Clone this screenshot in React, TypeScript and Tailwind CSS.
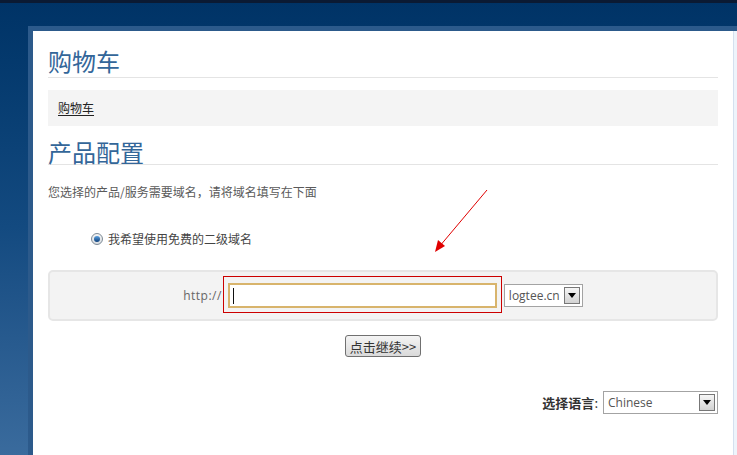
import React from 'react'

const cjk = "font-['Noto_Sans_CJK_SC','Noto_Sans',sans-serif]"
const latin = "font-['Open_Sans','Noto_Sans_CJK_SC',sans-serif]"

function DropArrow() {
  return (
    <span className='flex h-[17px] w-[16px] items-center justify-center border border-[#777] bg-linear-to-b from-[#f6f6f6] to-[#d2d2d2]'>
      <svg width='8' height='5' viewBox='0 0 8 5'>
        <path d='M0 0 H8 L4 5 Z' fill='#000' />
      </svg>
    </span>
  )
}

function FakeSelect({ value, width }: { value: string, width: string }) {
  return (
    <div className={`flex h-[23px] ${width} items-center justify-between border border-[#a3a3a3] bg-white pl-[4px] pr-[2px]`}>
      <span className={`${latin} text-[12px] leading-none text-[#555]`}>{value}</span>
      <DropArrow />
    </div>
  )
}

export default function App() {
  return (
    <div className={`relative h-[455px] w-[737px] overflow-hidden bg-linear-to-b from-[#003366] via-[#134a80] to-[#3a6b9d] ${cjk}`}>
      <div className='h-[3px] bg-[#0b1a33]' />

      <div className='ml-[28px] mt-[23px] flex h-[429px] border-l-[5px] border-t-[5px] border-[#2c5a8b] bg-white'>
        <div className='w-[700px] px-[15px] pt-[15px]'>
          <h2 className='border-b border-[#e4e4e4] pb-[1px] text-[24px] leading-[30px] font-normal text-[#336699]'>购物车</h2>

          <div className='mt-[12px] flex h-[36px] items-center bg-[#f4f4f4] px-[10px]'>
            <a className='text-[12px] text-[#222] underline underline-offset-2'>购物车</a>
          </div>

          <h2 className='mt-[13px] border-b border-[#e4e4e4] text-[24px] leading-[25px] font-normal text-[#336699]'>产品配置</h2>

          <p className='mt-[18px] text-[12px] leading-[18px] text-[#5a5a5a]'>您选择的产品/服务需要域名，请将域名填写在下面</p>

          <div className='mt-[29px] flex h-[18px] items-center gap-[5px] pl-[43px]'>
            <span className='flex h-[12px] w-[12px] items-center justify-center rounded-full border border-[#7d8a96] bg-linear-to-b from-[#f4f4f4] to-[#d8dde2]'>
              <span className='h-[6px] w-[6px] rounded-full bg-linear-to-b from-[#5aa0e0] to-[#0d3f7a]' />
            </span>
            <span className='text-[12px] text-[#444]'>我希望使用免费的二级域名</span>
          </div>

          <div className='mt-[22px] flex h-[51px] items-center justify-center rounded-[5px] border-2 border-[#e6e6e6] bg-[#f3f3f3]'>
            <span className={`${latin} text-[12px] tracking-[0.5px] text-[#666]`}>http://</span>
            <div className='ml-[1px] mt-[-2px] border border-[#cc0000] px-[4px] pb-[4px] pt-[6px]'>
              <div className='flex h-[25px] w-[269px] items-center border-2 border-[#d8b46c] bg-white pl-[3px]'>
                <span className='h-[16px] w-[1px] bg-[#111]' />
              </div>
            </div>
            <div className='ml-[2px]'>
              <FakeSelect value='logtee.cn' width='w-[79px]' />
            </div>
          </div>

          <div className='mt-[14px] flex justify-center'>
            <button className='h-[22px] rounded-[3px] border border-[#707070] bg-linear-to-b from-[#f4f4f4] to-[#dadada] px-[4px] text-[13px] leading-none text-[#333]'>
              点击继续&gt;&gt;
            </button>
          </div>

          <div className='mt-[34px] flex items-center justify-end gap-[5px]'>
            <span className='text-[13px] font-bold text-[#333]'>选择语言<span className='font-normal'>:</span></span>
            <FakeSelect value='Chinese' width='w-[115px]' />
          </div>
        </div>
        <div className='flex-1 border-l border-[#d4e0ef] bg-[#eef4fb]' />
      </div>

      <svg className='absolute left-[430px] top-[185px]' width='62' height='72' viewBox='0 0 62 72'>
        <line x1='57' y1='5' x2='9' y2='62' stroke='#e00000' strokeWidth='1' />
        <path d='M5 67 L8 55 L15 61 Z' fill='#e00000' />
      </svg>
    </div>
  )
}
